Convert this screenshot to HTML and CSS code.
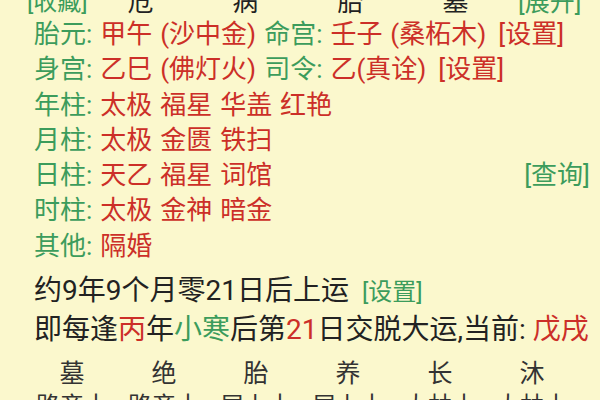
FILE: index.html
```html
<!DOCTYPE html>
<html lang="zh">
<head>
<meta charset="utf-8">
<link rel="stylesheet" href="styles.css">
</head>
<body>
<div class="page">
  <div class="head">
    <span class="g lbl">[收藏]</span>
    <span class="hc">危</span>
    <span class="hc">病</span>
    <span class="hc">胎</span>
    <span class="hc">墓</span>
    <span class="g more">[展开]</span>
  </div>
  <div class="row"><span class="g">胎元:</span> <span class="r">甲午 (沙中金)</span> <span class="g">命宫:</span> <span class="r">壬子 (桑柘木)</span> <span class="r set">[设置]</span></div>
  <div class="row"><span class="g">身宫:</span> <span class="r">乙巳 (佛灯火)</span> <span class="g">司令:</span> <span class="r">乙(真诠)</span> <span class="r set">[设置]</span></div>
  <div class="row"><span class="g">年柱:</span> <span class="r">太极 福星 华盖 红艳</span></div>
  <div class="row"><span class="g">月柱:</span> <span class="r">太极 金匮 铁扫</span></div>
  <div class="row split"><span><span class="g">日柱:</span> <span class="r">天乙 福星 词馆</span></span><span class="g">[查询]</span></div>
  <div class="row"><span class="g">时柱:</span> <span class="r">太极 金神 暗金</span></div>
  <div class="row"><span class="g">其他:</span> <span class="r">隔婚</span></div>
  <div class="big first">约9年9个月零21日后上运 <span class="g small">[设置]</span></div>
  <div class="big">即每逢<span class="r">丙</span>年<span class="g">小寒</span>后第<span class="r">21</span>日交脱大运,当前: <span class="r">戊戌</span></div>
  <div class="grid">
    <span>墓</span><span>绝</span><span>胎</span><span>养</span><span>长</span><span>沐</span>
  </div>
  <div class="grid sub">
    <span>路旁土</span><span>路旁土</span><span>屋上土</span><span>屋上土</span><span>大林木</span><span>大林木</span>
  </div>
</div>
</body>
</html>
```
FILE: styles.css
```css
html, body {
  margin: 0;
  padding: 0;
  background: #fbf8cd;
}
body {
  width: 600px;
  height: 400px;
  overflow: hidden;
  font-family: "Roboto", "Noto Sans CJK SC", sans-serif;
  color: #222;
}
.page {
  padding-left: 34px;
  margin-top: -18px;
}
.g { color: #3c9c5c; }
.r { color: #cc2f28; }
.set { margin-left: 4px; }
.head {
  display: flex;
  align-items: center;
  height: 35px;
  font-size: 26px;
  margin-left: -7px;
}
.head .lbl { width: 61px; font-size: 24px; }
.head .hc { width: 105px; text-align: center; color: #222; }
.head .more { margin-left: 10px; font-size: 25px; }
.row {
  font-size: 26px;
  line-height: 35.3px;
  height: 35.3px;
  white-space: nowrap;
  word-spacing: 1.5px;
}
.split {
  display: flex;
  justify-content: space-between;
  padding-right: 10px;
}
.big {
  font-size: 28px;
  line-height: 38px;
  white-space: nowrap;
}
.big.first { margin-top: 8px; }
.small { font-size: 24px; margin-left: 6px; }
.grid {
  display: grid;
  grid-template-columns: repeat(6, 92px);
  margin-left: -8px;
  margin-top: 10px;
  font-size: 25px;
  line-height: 30px;
  color: #333;
}
.grid span { text-align: center; }
.grid.sub { margin-top: 2px; font-size: 24px; }
```
